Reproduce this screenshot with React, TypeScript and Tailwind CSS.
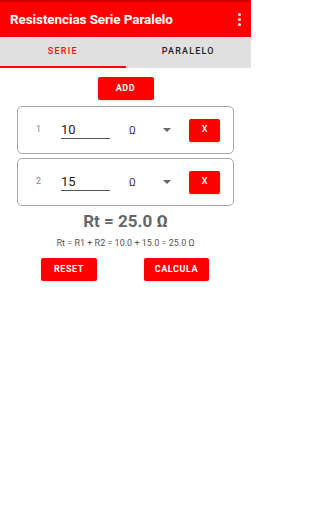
import { useState } from "react";

type Row = { id: number; value: string };

export default function App() {
  const [tab, setTab] = useState<"serie" | "paralelo">("serie");
  const [rows, setRows] = useState<Row[]>([
    { id: 1, value: "10" },
    { id: 2, value: "15" },
  ]);

  const total = rows.reduce((s, r) => s + (parseFloat(r.value) || 0), 0);

  return (
    <div
      className="min-h-screen w-[251px] bg-white"
      style={{ fontFamily: "Roboto, 'Liberation Sans', sans-serif" }}
    >
      {/* Toolbar */}
      <div className="h-[2px] bg-[#d00000]" />
      <div className="h-[35px] bg-[#ff0000] flex items-center justify-between pl-[10px] pr-[10px]">
        <h1 className="text-white text-[13.5px] font-bold tracking-[-0.1px]">
          Resistencias Serie Paralelo
        </h1>
        <div className="flex flex-col gap-[2px] items-center">
          <span className="w-[3px] h-[3px] bg-white rounded-full" />
          <span className="w-[3px] h-[3px] bg-white rounded-full" />
          <span className="w-[3px] h-[3px] bg-white rounded-full" />
        </div>
      </div>

      {/* Tabs */}
      <div className="h-[31px] bg-[#e0e0e0] flex">
        <button
          onClick={() => setTab("serie")}
          className={`flex-1 flex flex-col ${tab === "serie" ? "text-[#ee1111]" : "text-[#222]"}`}
        >
          <span className="flex-1 flex items-center justify-center text-[9px] font-medium tracking-[1.2px]">
            SERIE
          </span>
          <span className={`h-[2px] ${tab === "serie" ? "bg-[#ff0000]" : ""}`} />
        </button>
        <button
          onClick={() => setTab("paralelo")}
          className={`flex-1 flex flex-col ${tab === "paralelo" ? "text-[#ee1111]" : "text-[#222]"}`}
        >
          <span className="flex-1 flex items-center justify-center text-[9px] font-medium tracking-[1.2px]">
            PARALELO
          </span>
          <span className={`h-[2px] ${tab === "paralelo" ? "bg-[#ff0000]" : ""}`} />
        </button>
      </div>

      <div className="flex flex-col items-center pt-[9px]">
        <button
          onClick={() =>
            setRows([...rows, { id: rows.length + 1, value: "" }])
          }
          className="w-[56px] h-[23px] bg-[#ff0000] text-white text-[9px] font-bold tracking-[0.6px] rounded-[2px] shadow-sm"
        >
          ADD
        </button>

        <div className="flex flex-col gap-[4px] mt-[6px] w-[217px]">
          {rows.map((r, i) => (
            <div
              key={r.id}
              className="h-[48px] border border-[#a8a8a8] rounded-[5px] flex items-center pl-[18px] pr-[13px]"
            >
              <span className="text-[9px] text-[#888] w-[7px]">{i + 1}</span>
              <div className="ml-[18px] w-[49px] border-b border-[#555] h-[18px] flex items-end pb-[1px]">
                <input
                  value={r.value}
                  onChange={(e) =>
                    setRows(
                      rows.map((x) =>
                        x.id === r.id ? { ...x, value: e.target.value } : x
                      )
                    )
                  }
                  className="w-full text-[13px] text-[#222] outline-none bg-transparent leading-none"
                />
              </div>
              <span className="ml-[19px] text-[10px] text-[#333]">Ω</span>
              <svg
                width="8"
                height="4"
                viewBox="0 0 8 4"
                className="ml-[27px]"
              >
                <path d="M0 0h8L4 4z" fill="#666" />
              </svg>
              <button
                onClick={() => setRows(rows.filter((x) => x.id !== r.id))}
                className="ml-auto w-[31px] h-[23px] bg-[#ff0000] text-white text-[9px] font-medium rounded-[2px] shadow-sm"
              >
                X
              </button>
            </div>
          ))}
        </div>

        <p className="mt-[3px] text-[17px] font-bold text-[#666]">
          Rt = {total.toFixed(1)} Ω
        </p>
        <p className="mt-[2px] text-[9px] text-[#555]">
          Rt = {rows.map((_, i) => `R${i + 1}`).join(" + ")} ={" "}
          {rows.map((r) => (parseFloat(r.value) || 0).toFixed(1)).join(" + ")}{" "}
          = {total.toFixed(1)} Ω
        </p>

        <div className="flex w-full pl-[41px] pr-[42px] justify-between mt-[8px]">
          <button
            onClick={() => setRows([])}
            className="w-[56px] h-[23px] bg-[#ff0000] text-white text-[9px] font-bold tracking-[0.6px] rounded-[2px] shadow-sm"
          >
            RESET
          </button>
          <button className="w-[65px] h-[23px] bg-[#ff0000] text-white text-[9px] font-bold tracking-[0.6px] rounded-[2px] shadow-sm">
            CALCULA
          </button>
        </div>
      </div>
    </div>
  );
}
